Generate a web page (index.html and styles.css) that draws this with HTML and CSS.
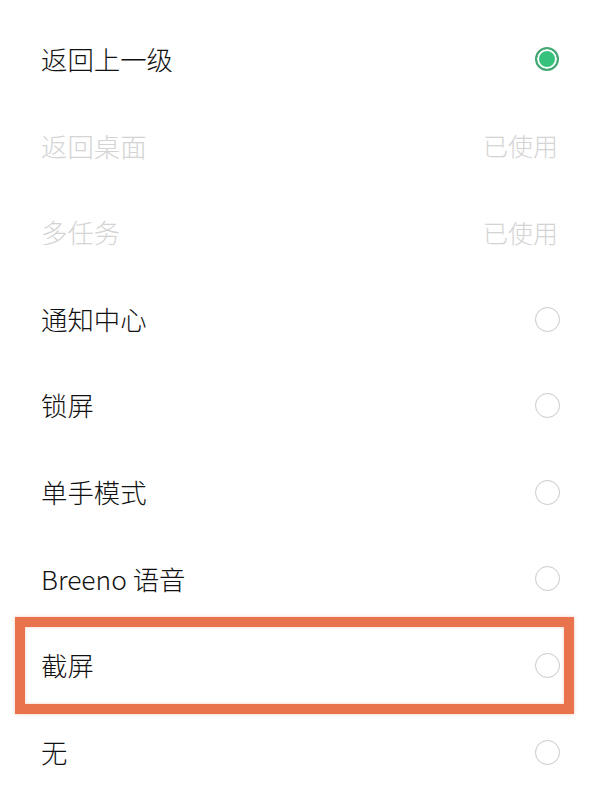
FILE: index.html
```html
<!DOCTYPE html>
<html lang="zh-CN">
<head>
<meta charset="utf-8">
<link rel="stylesheet" href="styles.css">
</head>
<body>
<div class="list">
  <div class="row"><span class="label">返回上一级</span><span class="radio on"></span></div>
  <div class="row disabled"><span class="label">返回桌面</span><span class="used">已使用</span></div>
  <div class="row disabled"><span class="label">多任务</span><span class="used">已使用</span></div>
  <div class="row"><span class="label">通知中心</span><span class="radio"></span></div>
  <div class="row"><span class="label">锁屏</span><span class="radio"></span></div>
  <div class="row"><span class="label">单手模式</span><span class="radio"></span></div>
  <div class="row"><span class="label">Breeno 语音</span><span class="radio"></span></div>
  <div class="row highlight"><span class="label">截屏</span><span class="radio"></span></div>
  <div class="row"><span class="label">无</span><span class="radio"></span></div>
</div>
</body>
</html>
```
FILE: styles.css
```css
html, body {
  margin: 0;
  padding: 0;
  background: #ffffff;
}
body {
  width: 600px;
  height: 802px;
  overflow: hidden;
  font-family: "Noto Sans CJK SC", "Noto Sans", sans-serif;
}
.list {
  padding-top: 16px;
  display: flex;
  flex-direction: column;
}
.row {
  position: relative;
  height: 86.6px;
  display: flex;
  align-items: center;
  justify-content: space-between;
  padding: 0 41px 0 41px;
  font-size: 26.4px;
  font-weight: 300;
  color: #111111;
}
.label {
  line-height: 1;
}
.row.disabled {
  color: #d4d4d4;
}
.used {
  font-size: 25px;
  line-height: 1;
  margin-right: 1px;
}
.radio {
  box-sizing: border-box;
  width: 25px;
  height: 25px;
  border-radius: 50%;
  border: 1.6px solid #c9c9c9;
  margin-right: -1px;
}
.radio.on {
  border: 2px solid #45a874;
  background: #36c27d;
  box-shadow: inset 0 0 0 2px #ffffff;
  width: 24px;
  height: 24px;
  margin-right: 0;
}
.row.highlight::after {
  content: "";
  position: absolute;
  left: 15px;
  right: 26px;
  top: -5px;
  bottom: -5px;
  border: 10px solid #e8734c;
  box-shadow: 0 0 3px rgba(240, 150, 110, 0.5), inset 0 0 3px rgba(240, 150, 110, 0.5);
  pointer-events: none;
}
```
